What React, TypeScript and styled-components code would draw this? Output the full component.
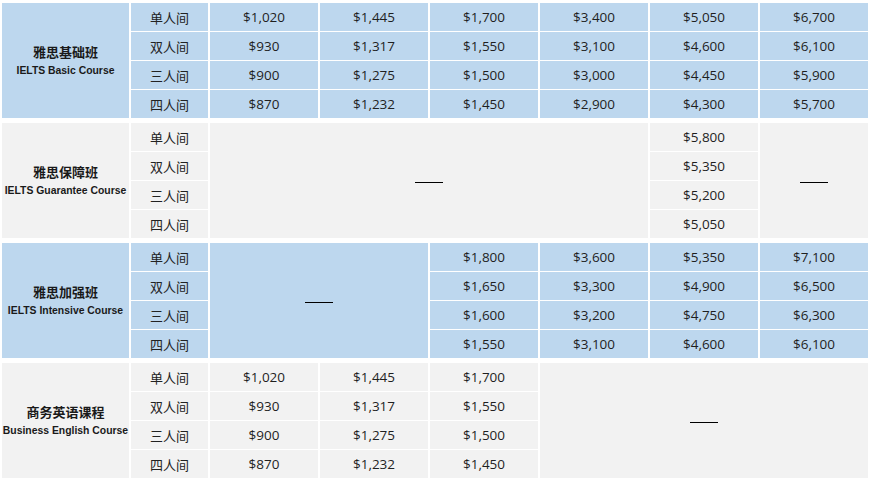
import React from 'react';
import styled, { createGlobalStyle } from 'styled-components';

const BLUE = '#bdd7ee';
const GREY = '#f2f2f2';

const Global = createGlobalStyle`
  html, body { margin: 0; padding: 0; background: #ffffff; }
  body {
    font-family: "Open Sans", "Noto Sans CJK SC", sans-serif;
    color: #222222;
  }
`;

const Table = styled.div`
  display: flex;
  flex-direction: column;
  gap: 5px;
  padding: 3px 2px 0 2px;
  width: 866px;
`;

const Block = styled.div`
  display: grid;
  grid-template-columns: 127px 77px repeat(6, 108px);
  grid-template-rows: repeat(4, 28px);
  column-gap: 2px;
  row-gap: 1px;
`;

type CellProps = {
  $bg: string;
  $col: number;
  $row: number;
  $colSpan?: number;
  $rowSpan?: number;
};

const Cell = styled.div<CellProps>`
  background: ${(p) => p.$bg};
  grid-column: ${(p) => p.$col} / span ${(p) => p.$colSpan ?? 1};
  grid-row: ${(p) => p.$row} / span ${(p) => p.$rowSpan ?? 1};
  display: flex;
  align-items: center;
  justify-content: center;
`;

const TitleCell = styled(Cell)`
  flex-direction: column;
  gap: 5px;
  padding-bottom: 2px;
`;

const TitleCn = styled.div`
  font-family: "Noto Sans CJK SC", sans-serif;
  font-weight: 700;
  font-size: 13px;
  line-height: 17px;
  color: #1a1a1a;
`;

const TitleEn = styled.div`
  font-family: "Liberation Sans", Arial, sans-serif;
  font-weight: 700;
  font-size: 10.4px;
  line-height: 12px;
  color: #1a1a1a;
  white-space: nowrap;
`;

const RoomCell = styled(Cell)`
  font-family: "Noto Sans CJK SC", sans-serif;
  font-size: 13px;
  color: #222222;
`;

const PriceCell = styled(Cell)`
  font-family: "Open Sans", sans-serif;
  font-size: 13.5px;
  color: #1f1f1f;
`;

const DashCell = styled(Cell)``;

const Dash = styled.span`
  display: block;
  width: 28px;
  height: 1px;
  margin-top: 3px;
  background: #000000;
`;

type Segment =
  | { kind: 'prices'; values: string[] }
  | { kind: 'dash'; span: number };

type BlockData = {
  bg: string;
  cn: string;
  en: string;
  segments: Segment[];
};

const rooms = ['单人间', '双人间', '三人间', '四人间'];

const blocks: BlockData[] = [
  {
    bg: BLUE,
    cn: '雅思基础班',
    en: 'IELTS Basic Course',
    segments: [
      { kind: 'prices', values: ['$1,020', '$930', '$900', '$870'] },
      { kind: 'prices', values: ['$1,445', '$1,317', '$1,275', '$1,232'] },
      { kind: 'prices', values: ['$1,700', '$1,550', '$1,500', '$1,450'] },
      { kind: 'prices', values: ['$3,400', '$3,100', '$3,000', '$2,900'] },
      { kind: 'prices', values: ['$5,050', '$4,600', '$4,450', '$4,300'] },
      { kind: 'prices', values: ['$6,700', '$6,100', '$5,900', '$5,700'] },
    ],
  },
  {
    bg: GREY,
    cn: '雅思保障班',
    en: 'IELTS Guarantee Course',
    segments: [
      { kind: 'dash', span: 4 },
      { kind: 'prices', values: ['$5,800', '$5,350', '$5,200', '$5,050'] },
      { kind: 'dash', span: 1 },
    ],
  },
  {
    bg: BLUE,
    cn: '雅思加强班',
    en: 'IELTS Intensive Course',
    segments: [
      { kind: 'dash', span: 2 },
      { kind: 'prices', values: ['$1,800', '$1,650', '$1,600', '$1,550'] },
      { kind: 'prices', values: ['$3,600', '$3,300', '$3,200', '$3,100'] },
      { kind: 'prices', values: ['$5,350', '$4,900', '$4,750', '$4,600'] },
      { kind: 'prices', values: ['$7,100', '$6,500', '$6,300', '$6,100'] },
    ],
  },
  {
    bg: GREY,
    cn: '商务英语课程',
    en: 'Business English Course',
    segments: [
      { kind: 'prices', values: ['$1,020', '$930', '$900', '$870'] },
      { kind: 'prices', values: ['$1,445', '$1,317', '$1,275', '$1,232'] },
      { kind: 'prices', values: ['$1,700', '$1,550', '$1,500', '$1,450'] },
      { kind: 'dash', span: 3 },
    ],
  },
];

function renderSegments(b: BlockData) {
  const out: React.ReactNode[] = [];
  let col = 3;
  b.segments.forEach((s, i) => {
    if (s.kind === 'dash') {
      out.push(
        <DashCell key={`d${i}`} $bg={b.bg} $col={col} $colSpan={s.span} $row={1} $rowSpan={4}>
          <Dash />
        </DashCell>
      );
      col += s.span;
    } else {
      s.values.forEach((v, r) => {
        out.push(
          <PriceCell key={`p${i}-${r}`} $bg={b.bg} $col={col} $row={r + 1}>
            {v}
          </PriceCell>
        );
      });
      col += 1;
    }
  });
  return out;
}

export default function App() {
  return (
    <>
      <Global />
      <Table>
        {blocks.map((b) => (
          <Block key={b.cn}>
            <TitleCell $bg={b.bg} $col={1} $row={1} $rowSpan={4}>
              <TitleCn>{b.cn}</TitleCn>
              <TitleEn>{b.en}</TitleEn>
            </TitleCell>
            {rooms.map((r, i) => (
              <RoomCell key={r} $bg={b.bg} $col={2} $row={i + 1}>
                {r}
              </RoomCell>
            ))}
            {renderSegments(b)}
          </Block>
        ))}
      </Table>
    </>
  );
}
